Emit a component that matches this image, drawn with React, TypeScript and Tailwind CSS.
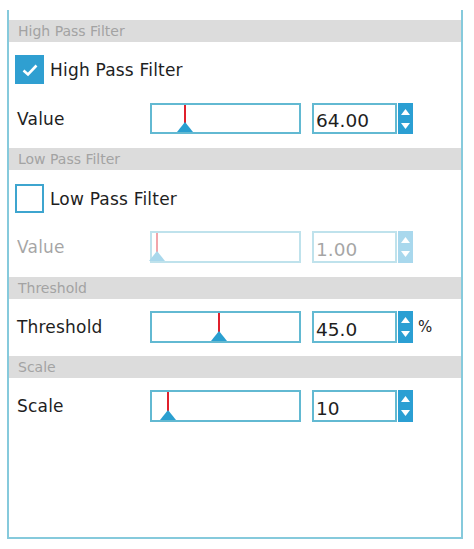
const font = { fontFamily: '"DejaVu Sans", "Liberation Sans", sans-serif' };

function Header({ title }: { title: string }) {
  return (
    <div className="h-[22px] bg-[#dcdcdc] pl-[9px] text-[14px] leading-[23px] text-[#a3a3a3]">
      {title}
    </div>
  );
}

function Check({ checked, label }: { checked: boolean; label: string }) {
  return (
    <div className="flex h-[29px] items-center pl-[6px]">
      {checked ? (
        <div className="flex h-[29px] w-[29px] items-center justify-center bg-[#2f9fd1]">
          <svg width="18" height="14" viewBox="0 0 18 14">
            <path d="M2.5 7.5 L7 11.5 L15.5 2.5" fill="none" stroke="white" strokeWidth="2.6" />
          </svg>
        </div>
      ) : (
        <div className="h-[29px] w-[29px] border-2 border-[#3ea5cf] bg-white" />
      )}
      <span className="ml-[6px] pt-[3px] text-[17px] tracking-[0.2px] text-[#1e1e1e]">{label}</span>
    </div>
  );
}

function Spinner() {
  return (
    <div className="ml-[1px] flex h-full w-[15px] flex-col items-center justify-center gap-[8px] bg-[#2b9fd3]">
      <svg width="9" height="6" viewBox="0 0 9 6">
        <path d="M4.5 0 L9 6 L0 6 Z" fill="white" />
      </svg>
      <svg width="9" height="6" viewBox="0 0 9 6">
        <path d="M0 0 L9 0 L4.5 6 Z" fill="white" />
      </svg>
    </div>
  );
}

function Row({
  label,
  pos,
  value,
  unit,
  disabled,
  h,
}: {
  label: string;
  pos: number;
  value: string;
  unit?: string;
  disabled?: boolean;
  h: string;
}) {
  return (
    <div className={`flex items-center pl-[8px] ${h} ${disabled ? "opacity-40" : ""}`}>
      <span className="w-[133px] pt-[2px] text-[17px] tracking-[0.2px] text-[#1e1e1e]">{label}</span>
      <div className="relative h-full w-[151px] border-2 border-[#62b9d2] bg-white">
        <div
          className="absolute top-0 h-[calc(100%-9px)] w-[2px] bg-[#e0202c]"
          style={{ left: pos - 1 }}
        />
        <svg
          className="absolute bottom-0"
          style={{ left: pos - 8 }}
          width="16"
          height="10"
          viewBox="0 0 16 10"
        >
          <path d="M8 0 L16 10 L0 10 Z" fill="#2a9fd0" />
        </svg>
      </div>
      <div className="ml-[11px] flex h-full w-[85px] items-center border-2 border-[#62b9d2] bg-white pl-[2px] pt-[5px] text-[18.5px] text-[#1e1e1e]">
        {value}
      </div>
      <Spinner />
      {unit && <span className="ml-[5px] text-[15px] text-[#1e1e1e]">{unit}</span>}
    </div>
  );
}

export default function App() {
  return (
    <div className="h-[549px] w-[474px] bg-white pl-[7px] pt-[10px]" style={font}>
      <div className="h-[529px] w-[456px] border-x-2 border-b-2 border-[#86cadc] pt-[10px]">
        <Header title="High Pass Filter" />
        <div className="mt-[13px]">
          <Check checked label="High Pass Filter" />
        </div>
        <div className="mt-[19px]">
          <Row label="Value" pos={33} value="64.00" h="h-[31px]" />
        </div>
        <div className="mt-[14px]">
          <Header title="Low Pass Filter" />
        </div>
        <div className="mt-[14px]">
          <Check checked={false} label="Low Pass Filter" />
        </div>
        <div className="mt-[18px]">
          <Row label="Value" pos={5} value="1.00" disabled h="h-[32px]" />
        </div>
        <div className="mt-[14px]">
          <Header title="Threshold" />
        </div>
        <div className="mt-[12px]">
          <Row label="Threshold" pos={67} value="45.0" unit="%" h="h-[32px]" />
        </div>
        <div className="mt-[13px]">
          <Header title="Scale" />
        </div>
        <div className="mt-[12px]">
          <Row label="Scale" pos={16} value="10" h="h-[32px]" />
        </div>
      </div>
    </div>
  );
}
